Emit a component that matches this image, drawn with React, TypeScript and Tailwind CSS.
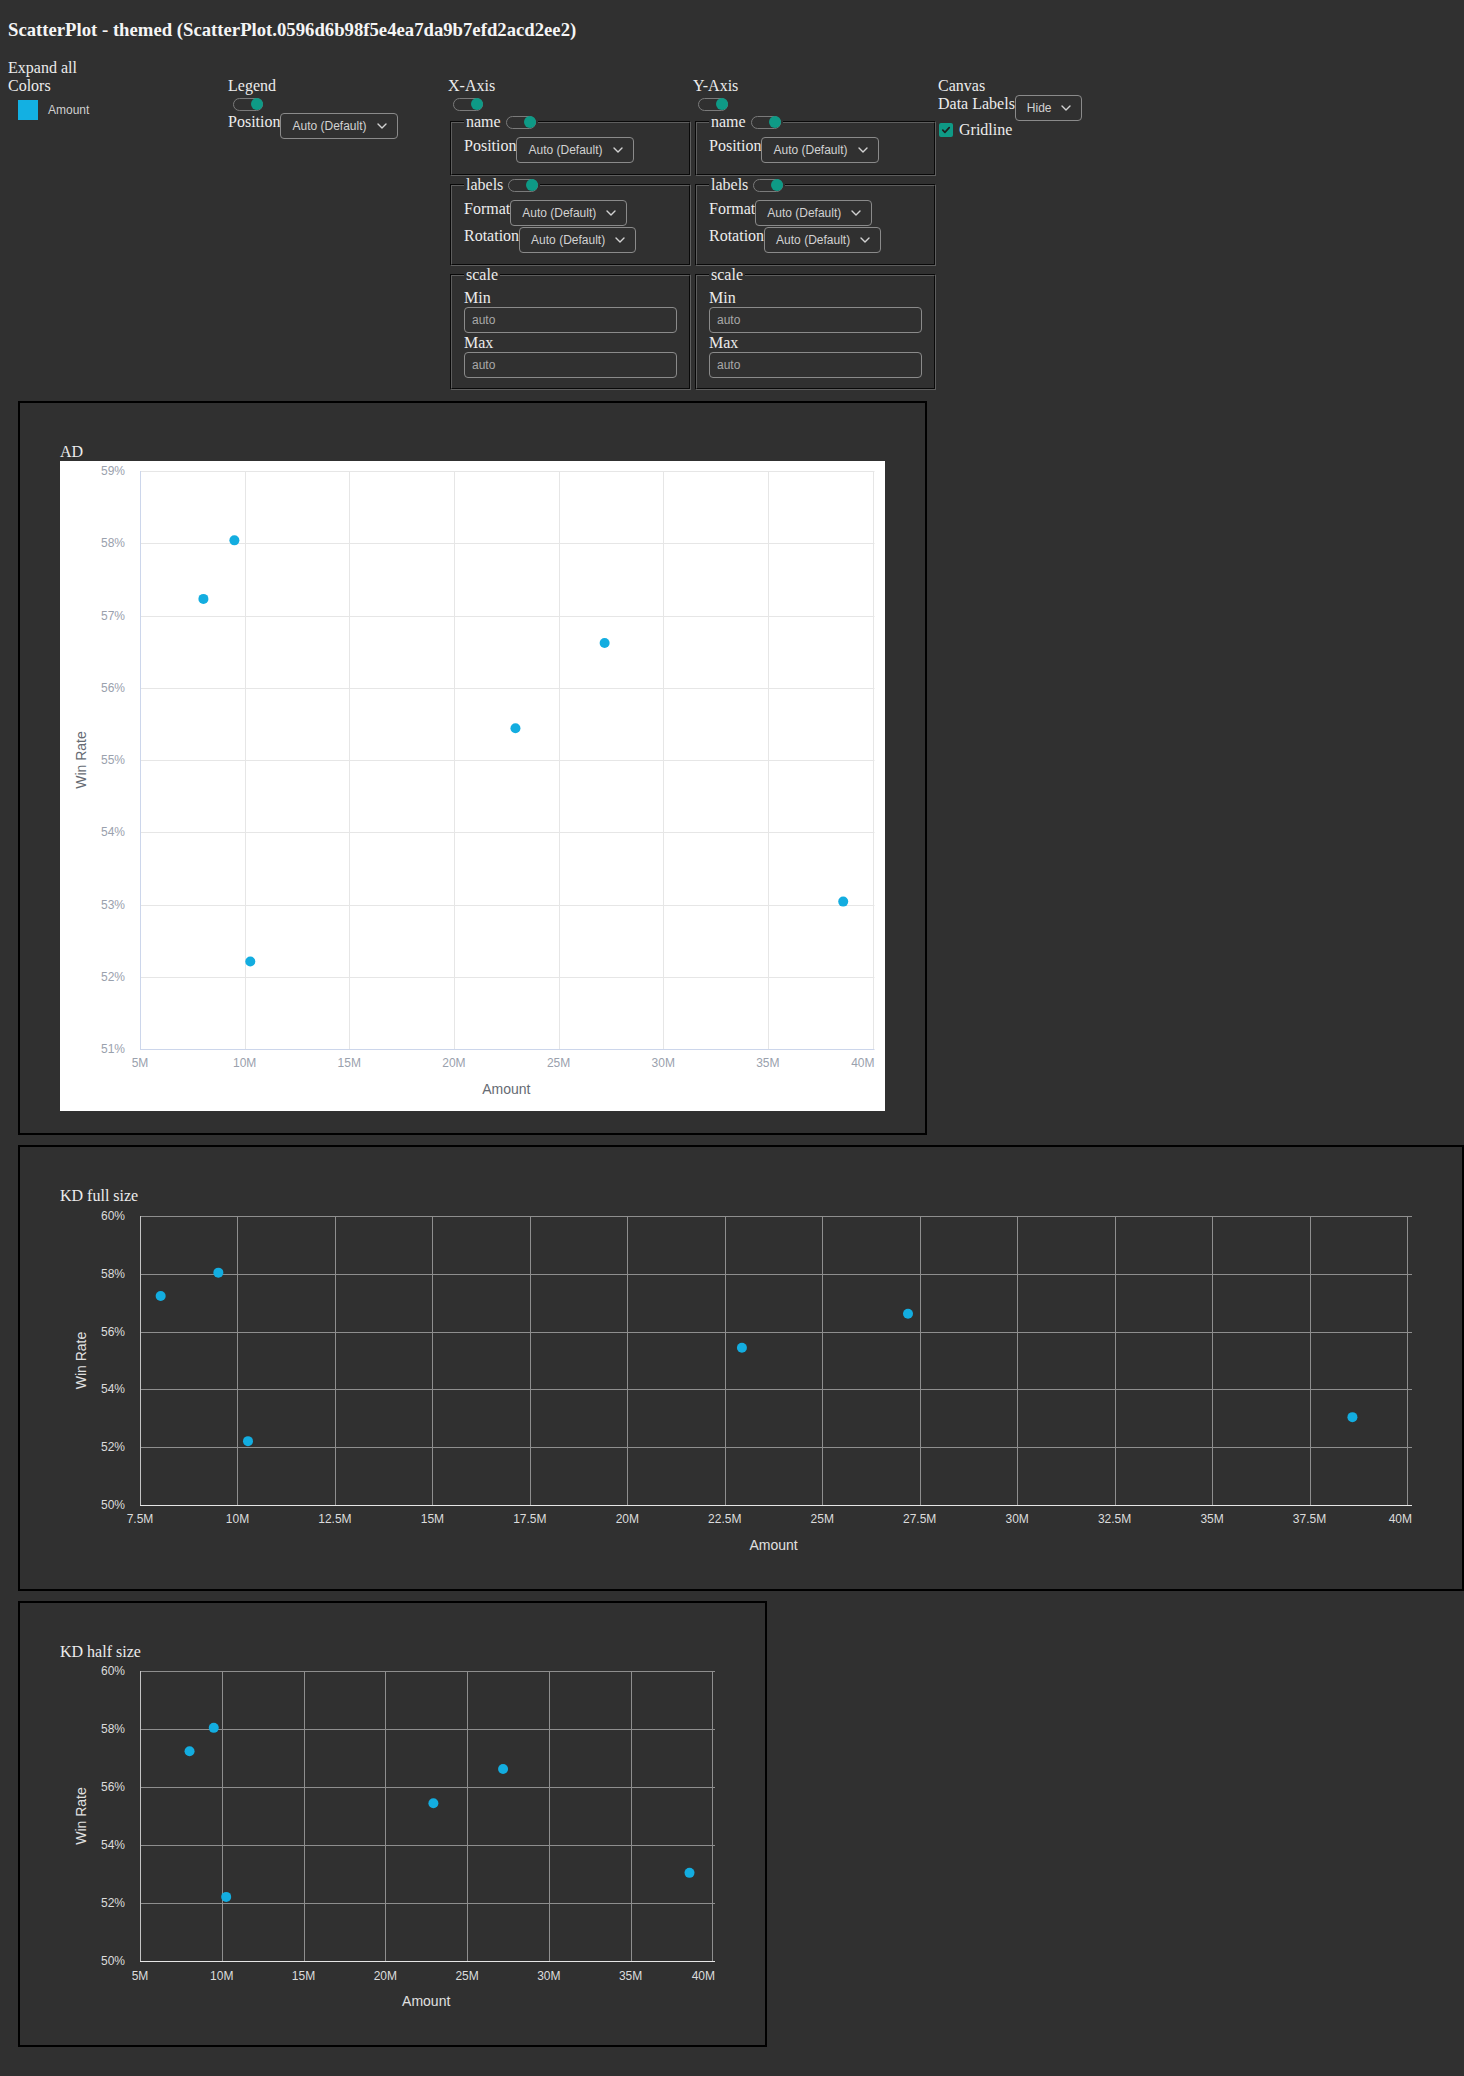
import React from "react";

const DATA: [number, number][] = [
  [8.03, 57.23],
  [9.51, 58.04],
  [10.27, 52.21],
  [22.94, 55.44],
  [27.2, 56.62],
  [38.6, 53.04],
];

const SANS = "'Liberation Sans', Arial, sans-serif";

type ChartProps = {
  width: number;
  height: number;
  x0: number;
  x1: number;
  y0: number;
  y1: number;
  gridRight: number;
  xMin: number;
  xMax: number;
  xStep: number;
  yMin: number;
  yMax: number;
  yStep: number;
  xLabelY: number;
  titleY: number;
  theme: "light" | "dark";
};

function range(min: number, max: number, step: number) {
  const out: number[] = [];
  for (let v = min; v <= max + 1e-9; v += step) out.push(Math.round(v * 100) / 100);
  return out;
}

function Chart(p: ChartProps) {
  const sx = (v: number) => p.x0 + ((v - p.xMin) / (p.xMax - p.xMin)) * (p.x1 - p.x0);
  const sy = (v: number) => p.y1 - ((v - p.yMin) / (p.yMax - p.yMin)) * (p.y1 - p.y0);
  const crisp = (n: number) => Math.round(n) + 0.5;
  const light = p.theme === "light";
  const grid = light ? "#e6e6e6" : "#8e8e8e";
  const leftAxis = light ? "#ccd6eb" : "#c4c4c4";
  const bottomAxis = light ? "#ccd6eb" : "#e6e6e6";
  const tickColor = light ? "#9aa1ad" : "#dcdcdc";
  const titleColor = light ? "#666b73" : "#e0e0e0";
  const xTicks = range(p.xMin, p.xMax, p.xStep);
  const yTicks = range(p.yMin, p.yMax, p.yStep);
  const cy = (p.y0 + p.y1) / 2;
  const cx = (p.x0 + p.x1) / 2;
  return (
    <svg width={p.width} height={p.height} className="block" style={{ fontFamily: SANS }}>
      {light && <rect width={p.width} height={p.height} fill="#ffffff" />}
      {yTicks
        .filter((v) => v !== p.yMin)
        .map((v) => (
          <line key={"h" + v} x1={p.x0} x2={p.gridRight} y1={crisp(sy(v))} y2={crisp(sy(v))} stroke={grid} strokeWidth={1} />
        ))}
      {xTicks
        .filter((v) => v !== p.xMin)
        .map((v) => (
          <line key={"v" + v} x1={crisp(sx(v))} x2={crisp(sx(v))} y1={p.y0} y2={p.y1} stroke={grid} strokeWidth={1} />
        ))}
      <line x1={crisp(p.x0)} x2={crisp(p.x0)} y1={p.y0} y2={p.y1} stroke={leftAxis} strokeWidth={1} />
      <line x1={p.x0} x2={p.gridRight} y1={crisp(p.y1)} y2={crisp(p.y1)} stroke={bottomAxis} strokeWidth={1} />
      {yTicks.map((v) => (
        <text key={"yl" + v} x={65} y={sy(v) + 4} textAnchor="end" fontSize={12} fill={tickColor}>
          {v}%
        </text>
      ))}
      {xTicks.map((v, i) => {
        const last = i === xTicks.length - 1;
        return (
          <text
            key={"xl" + v}
            x={last ? p.gridRight : sx(v)}
            y={p.xLabelY}
            textAnchor={last ? "end" : "middle"}
            fontSize={12}
            fill={tickColor}
          >
            {v}M
          </text>
        );
      })}
      <text x={cx} y={p.titleY} textAnchor="middle" fontSize={14} fill={titleColor}>
        Amount
      </text>
      <text x={26} y={cy} transform={`rotate(-90 26 ${cy})`} textAnchor="middle" fontSize={14} fill={titleColor}>
        Win Rate
      </text>
      {DATA.map(([x, y], i) => (
        <circle key={"d" + i} cx={sx(x)} cy={sy(y)} r={5} fill="#13ade0" />
      ))}
    </svg>
  );
}

function Toggle() {
  return (
    <span className="inline-flex h-[13px] w-[30px] items-center justify-end rounded-full border border-[#7a7a7a]">
      <span className="-mr-px h-[12px] w-[12px] rounded-full bg-[#0e9a86]" />
    </span>
  );
}

function ToggleLine() {
  return (
    <div className="flex h-[18px] items-center pl-[5px]">
      <Toggle />
    </div>
  );
}

function Select({ label = "Auto (Default)", className = "" }: { label?: string; className?: string }) {
  return (
    <div
      className={`flex h-[26px] shrink-0 items-center justify-between rounded-[4px] border border-[#8a8a8a] pl-[11px] pr-[10px] font-['Liberation_Sans',Arial,sans-serif] text-[12px] leading-[normal] text-[#d2d2d2] ${className}`}
    >
      <span>{label}</span>
      <svg width="10" height="6" viewBox="0 0 10 6" fill="none">
        <path d="M1 1l4 4 4-4" stroke="currentColor" strokeWidth="1.4" strokeLinecap="round" strokeLinejoin="round" />
      </svg>
    </div>
  );
}

function Group({
  title,
  toggle = true,
  pt = "pt-[6px]",
  pb = "pb-[11px]",
  children,
}: {
  title: string;
  toggle?: boolean;
  pt?: string;
  pb?: string;
  children: React.ReactNode;
}) {
  return (
    <fieldset className={`mx-[2px] border-2 border-[#5e5e5e] px-[12px] [border-style:groove] ${pt} ${pb}`}>
      <legend className="px-[2px]">
        <div className="flex h-[18px] items-center">
          <span>{title}</span>
          {toggle && (
            <span className="ml-[5px] flex">
              <Toggle />
            </span>
          )}
        </div>
      </legend>
      {children}
    </fieldset>
  );
}

function Row({ label, w }: { label: string; w: string }) {
  return (
    <div className="flex items-start">
      <span>{label}</span>
      <Select className={w} />
    </div>
  );
}

function InputBox() {
  return (
    <div className="flex h-[26px] w-full items-center rounded-[4px] border border-[#8a8a8a] pl-[7px] font-['Liberation_Sans',Arial,sans-serif] text-[12px] leading-[normal] text-[#a8a8a8]">
      auto
    </div>
  );
}

function AxisColumn({ title }: { title: string }) {
  return (
    <div className="w-[245px] shrink-0">
      <div>{title}</div>
      <ToggleLine />
      <Group title="name">
        <Row label="Position" w="w-[118px]" />
      </Group>
      <Group title="labels">
        <div className="flex flex-col gap-[1px]">
          <Row label="Format" w="w-[117px]" />
          <Row label="Rotation" w="w-[117px]" />
        </div>
      </Group>
      <Group title="scale" toggle={false} pt="pt-[5px]" pb="pb-[10px]">
        <div>Min</div>
        <InputBox />
        <div className="mt-[1px]">Max</div>
        <InputBox />
      </Group>
    </div>
  );
}

export default function App() {
  return (
    <div className="min-h-screen bg-[#303030] px-2 pb-2 pt-[18.72px] font-['Liberation_Serif',serif] text-[16px] leading-[normal] text-[#ececec]">
      <h3 className="mb-[18.72px] text-[18.72px] font-bold leading-[normal] text-[#f5f5f5]">
        ScatterPlot - themed (ScatterPlot.0596d6b98f5e4ea7da9b7efd2acd2ee2)
      </h3>
      <div>Expand all</div>
      <div className="flex items-start">
        <div className="w-[220px] shrink-0">
          <div>Colors</div>
          <div className="ml-[10px] mt-[5px] flex items-center">
            <span className="h-5 w-5 bg-[#13b0e2]" />
            <span className="ml-[10px] font-['Liberation_Sans',Arial,sans-serif] text-[12px] text-[#cfcfcf]">Amount</span>
          </div>
        </div>
        <div className="w-[220px] shrink-0">
          <div>Legend</div>
          <ToggleLine />
          <div className="flex items-start">
            <span>Position</span>
            <Select className="w-[118px]" />
          </div>
        </div>
        <AxisColumn title="X-Axis" />
        <AxisColumn title="Y-Axis" />
        <div className="flex-1">
          <div>Canvas</div>
          <div className="flex items-start">
            <span>Data Labels</span>
            <Select label="Hide" className="w-[67px]" />
          </div>
          <div className="flex items-center">
            <span className="ml-[1px] flex h-[14px] w-[14px] items-center justify-center rounded-[2px] bg-[#0f9a86]">
              <svg width="10" height="10" viewBox="0 0 10 10" fill="none">
                <path d="M1.8 5.2l2.1 2.1 4.3-4.6" stroke="#1f1f1f" strokeWidth="1.7" strokeLinecap="round" strokeLinejoin="round" />
              </svg>
            </span>
            <span className="ml-[6px]">Gridline</span>
          </div>
        </div>
      </div>

      <div className="ml-[10px] mt-[11px] w-[909px] border-2 border-black px-10 pb-[22px] pt-10">
        <div>AD</div>
        <Chart
          theme="light"
          width={825}
          height={650}
          x0={80}
          x1={812.5}
          y0={10}
          y1={588}
          gridRight={814.5}
          xMin={5}
          xMax={40}
          xStep={5}
          yMin={51}
          yMax={59}
          yStep={1}
          xLabelY={606}
          titleY={633}
        />
      </div>

      <div className="-mr-2 ml-[10px] mt-[10px] border-2 border-black px-10 pb-[22px] pt-10">
        <div>KD full size</div>
        <Chart
          theme="dark"
          width={1362}
          height={362}
          x0={80}
          x1={1347}
          y0={11}
          y1={300}
          gridRight={1352}
          xMin={7.5}
          xMax={40}
          xStep={2.5}
          yMin={50}
          yMax={60}
          yStep={2}
          xLabelY={318}
          titleY={345}
        />
      </div>

      <div className="ml-[10px] mt-[10px] w-[749px] border-2 border-black px-10 pb-[22px] pt-10">
        <div>KD half size</div>
        <Chart
          theme="dark"
          width={665}
          height={362}
          x0={80}
          x1={652.4}
          y0={10}
          y1={300}
          gridRight={655}
          xMin={5}
          xMax={40}
          xStep={5}
          yMin={50}
          yMax={60}
          yStep={2}
          xLabelY={319}
          titleY={345}
        />
      </div>
    </div>
  );
}
